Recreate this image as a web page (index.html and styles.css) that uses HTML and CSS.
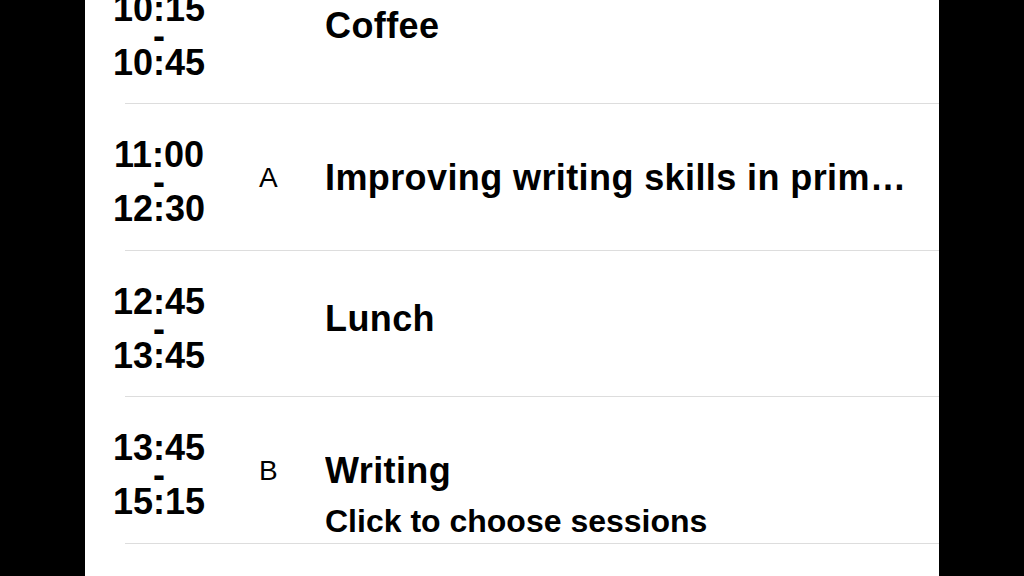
FILE: index.html
```html
<!DOCTYPE html>
<html lang="en">
<head>
<meta charset="utf-8">
<title>Schedule</title>
<link rel="stylesheet" href="styles.css">
</head>
<body>
<main class="panel">
  <ul class="schedule">
    <li class="row">
      <div class="time">10:15<br>-<br>10:45</div>
      <div class="track"></div>
      <div class="info"><div class="title">Coffee</div></div>
    </li>
    <li class="row row--detail">
      <div class="time">11:00<br>-<br>12:30</div>
      <div class="track">A</div>
      <div class="info"><div class="title">Improving writing skills in primary school</div></div>
    </li>
    <li class="row">
      <div class="time">12:45<br>-<br>13:45</div>
      <div class="track"></div>
      <div class="info"><div class="title">Lunch</div></div>
    </li>
    <li class="row row--detail">
      <div class="time">13:45<br>-<br>15:15</div>
      <div class="track">B</div>
      <div class="info">
        <div class="title">Writing</div>
        <div class="subtitle">Click to choose sessions</div>
      </div>
    </li>
  </ul>
</main>
</body>
</html>
```

FILE: styles.css
```css
html, body {
  margin: 0;
  padding: 0;
  height: 100%;
  background: #000;
  overflow: hidden;
}

body {
  font-family: "Liberation Sans", Arial, sans-serif;
  color: #000;
}

.panel {
  width: 854px;
  height: 100%;
  margin-left: 85px;
  background: #fff;
  overflow: hidden;
}

.schedule {
  list-style: none;
  margin: -42.5px 0 0 0;
  padding: 0;
}

.row {
  display: flex;
  align-items: flex-start;
  height: 146.5px;
  box-sizing: border-box;
  background: linear-gradient(#dddddd, #dddddd) no-repeat 40px 100% / calc(100% - 40px) 1px;
}

.time {
  width: 148px;
  flex: none;
  padding-top: 37px;
  text-align: center;
  font-size: 36px;
  line-height: 27px;
  font-weight: bold;
}

.track {
  width: 66px;
  flex: none;
  padding-left: 26px;
  padding-top: 48px;
  font-size: 28px;
  line-height: 40px;
}

.info {
  width: 590px;
  flex: none;
  padding-top: 48px;
}

.row--detail .track,
.row--detail .info {
  padding-top: 54px;
}

.title {
  font-size: 36px;
  line-height: 40px;
  font-weight: bold;
  letter-spacing: 0.4px;
  white-space: nowrap;
  overflow: hidden;
  text-overflow: ellipsis;
}

.subtitle {
  margin-top: 12px;
  font-size: 32px;
  line-height: 36px;
  font-weight: bold;
  white-space: nowrap;
}
```
